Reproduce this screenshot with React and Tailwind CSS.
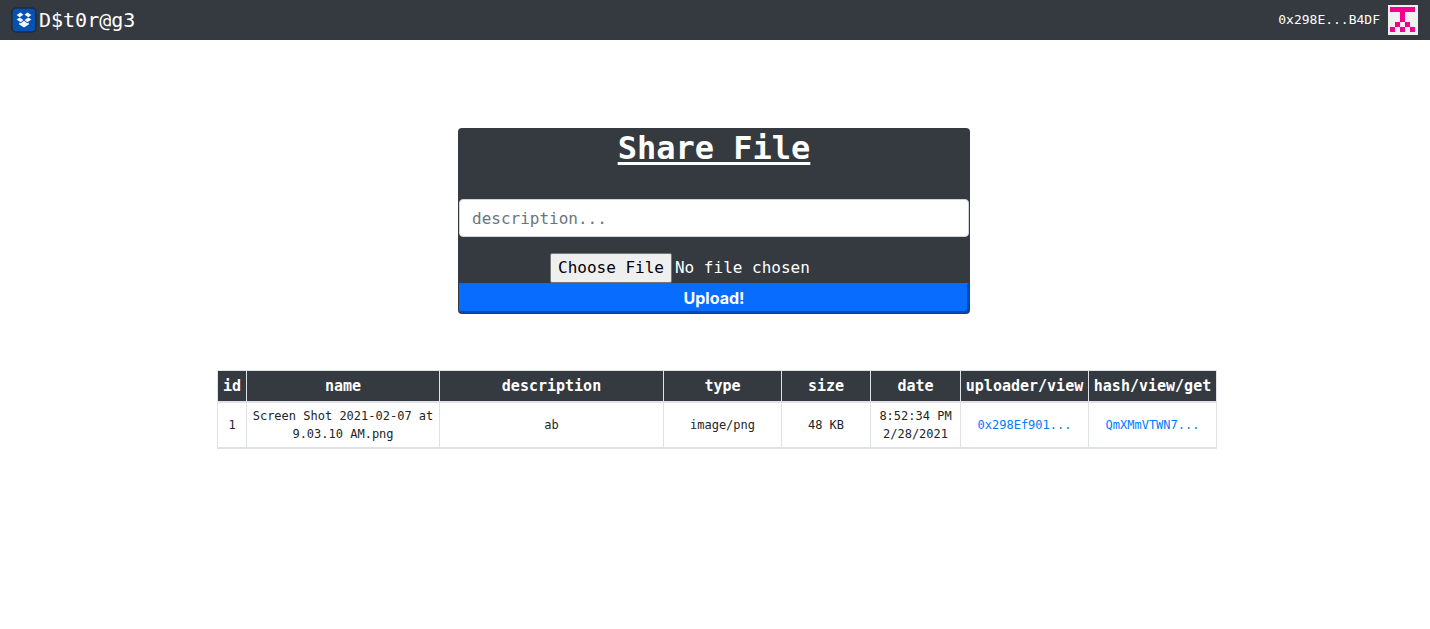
import React from 'react';

const columns = [
  { label: 'id', width: 'w-[29px]' },
  { label: 'name', width: 'w-[193px]' },
  { label: 'description', width: 'w-[224px]' },
  { label: 'type', width: 'w-[118px]' },
  { label: 'size', width: 'w-[89px]' },
  { label: 'date', width: 'w-[90px]' },
  { label: 'uploader/view', width: 'w-[128px]' },
  { label: 'hash/view/get', width: 'w-[128px]' },
];

const files = [
  {
    id: 1,
    name: 'Screen Shot 2021-02-07 at 9.03.10 AM.png',
    description: 'ab',
    type: 'image/png',
    size: '48 KB',
    time: '8:52:34 PM',
    day: '2/28/2021',
    uploader: '0x298Ef901...',
    hash: 'QmXMmVTWN7...',
  },
];

function Logo() {
  return (
    <svg className="size-[26px] shrink-0" viewBox="0 0 26 26" aria-hidden="true">
      <rect x="0.3" y="0.3" width="25.4" height="25.4" rx="5" fill="#1b2c45" />
      <rect x="1.8" y="1.8" width="22.4" height="22.4" rx="3.2" fill="#0751b0" />
      <g fill="#f4f6fa">
        <path d="M9.6 5.4 12.4 7.7 8.7 10.2 5.6 7.9z" />
        <path d="M16.4 5.4 13.6 7.7 17.3 10.2 20.4 7.9z" />
        <path d="M5.6 12.6 8.7 10.5 12.5 13.1 9.6 15.3z" />
        <path d="M20.4 12.6 17.3 10.5 13.5 13.1 16.4 15.3z" />
        <path d="M13 13.8 16.4 16.3 17.8 15.6V17.4L13 20.4 8.2 17.4V15.6L9.6 16.3z" />
      </g>
    </svg>
  );
}

function Identicon() {
  return (
    <svg className="size-[30px] shrink-0" viewBox="0 0 30 30" shapeRendering="crispEdges" aria-hidden="true">
      <path d="M0 0h30v30H0z" fill="#f0f0f0" />
      <path
        d="M2 2h25v5H2zM12 7h5v10h-5zM7 17h5v5H7zM17 17h5v5h-5zM2 22h5v5H2zM12 22h5v5h-5zM22 22h5v5h-5z"
        fill="#f3008f"
      />
    </svg>
  );
}

export default function App() {
  return (
    <div className="font-['DejaVu_Sans_Mono',monospace] text-[#212529]">
      <nav className="flex h-10 items-center justify-between bg-[#343a40] pr-3 pl-[11px] text-white">
        <a href="#" className="flex items-center gap-[2px] text-xl">
          <Logo />
          D$t0r@g3
        </a>
        <div className="flex items-center gap-2 text-[13px]">
          <a href="#">0x298E...B4DF</a>
          <Identicon />
        </div>
      </nav>

      <main className="flex flex-col items-center pt-[88px] pr-0.5">
        <section className="w-full max-w-lg rounded bg-[#343a40] p-px text-center text-white">
          <h2 className="text-[32px] leading-[38px] font-bold underline decoration-[3px] underline-offset-[3px]">
            Share File
          </h2>
          <form className="mt-8" onSubmit={(event) => event.preventDefault()}>
            <input
              type="text"
              aria-label="description"
              placeholder="description..."
              className="block h-[38px] w-full rounded border border-[#ced4da] bg-white px-3 text-base text-[#495057] placeholder:text-[#6c757d]"
            />
            <input
              type="file"
              aria-label="File"
              className="mx-auto mt-4 block h-[30px] w-[328px] text-base file:mr-[3px] file:h-[30px] file:rounded-[2px] file:border file:border-solid file:border-[#767676] file:bg-[#efefef] file:px-[7px] file:text-black"
            />
            <button
              type="submit"
              className="block w-full rounded-b border-2 border-t-[#086cff] border-r-[#004bb8] border-b-[#004bb8] border-l-[#086cff] bg-[#086cff] font-[Inter,sans-serif] text-base leading-[26px] font-bold"
            >
              Upload!
            </button>
          </form>
        </section>

        <div className="mt-14 w-full max-w-[1006px] pl-1.5">
          <table className="w-full table-fixed border-collapse border border-[#dee2e6] text-center">
            <thead className="bg-[#343a40] text-[15px] leading-[22px] text-white">
              <tr>
                {columns.map(({ label, width }) => (
                  <th
                    key={label}
                    scope="col"
                    className={`${width} border border-b-2 border-[#dee2e6] py-1 font-bold`}
                  >
                    {label}
                  </th>
                ))}
              </tr>
            </thead>
            <tbody className="text-xs leading-[18px]">
              {files.map((file) => (
                <tr key={file.id} className="[&>td]:border [&>td]:border-b-2 [&>td]:border-[#dee2e6] [&>td]:p-1">
                  <td>{file.id}</td>
                  <td>{file.name}</td>
                  <td>{file.description}</td>
                  <td>{file.type}</td>
                  <td>{file.size}</td>
                  <td>
                    {file.time}
                    <br />
                    {file.day}
                  </td>
                  <td>
                    <a href="#" className="text-[#007bff]">{file.uploader}</a>
                  </td>
                  <td>
                    <a href="#" className="text-[#007bff]">{file.hash}</a>
                  </td>
                </tr>
              ))}
            </tbody>
          </table>
        </div>
      </main>
    </div>
  );
}
